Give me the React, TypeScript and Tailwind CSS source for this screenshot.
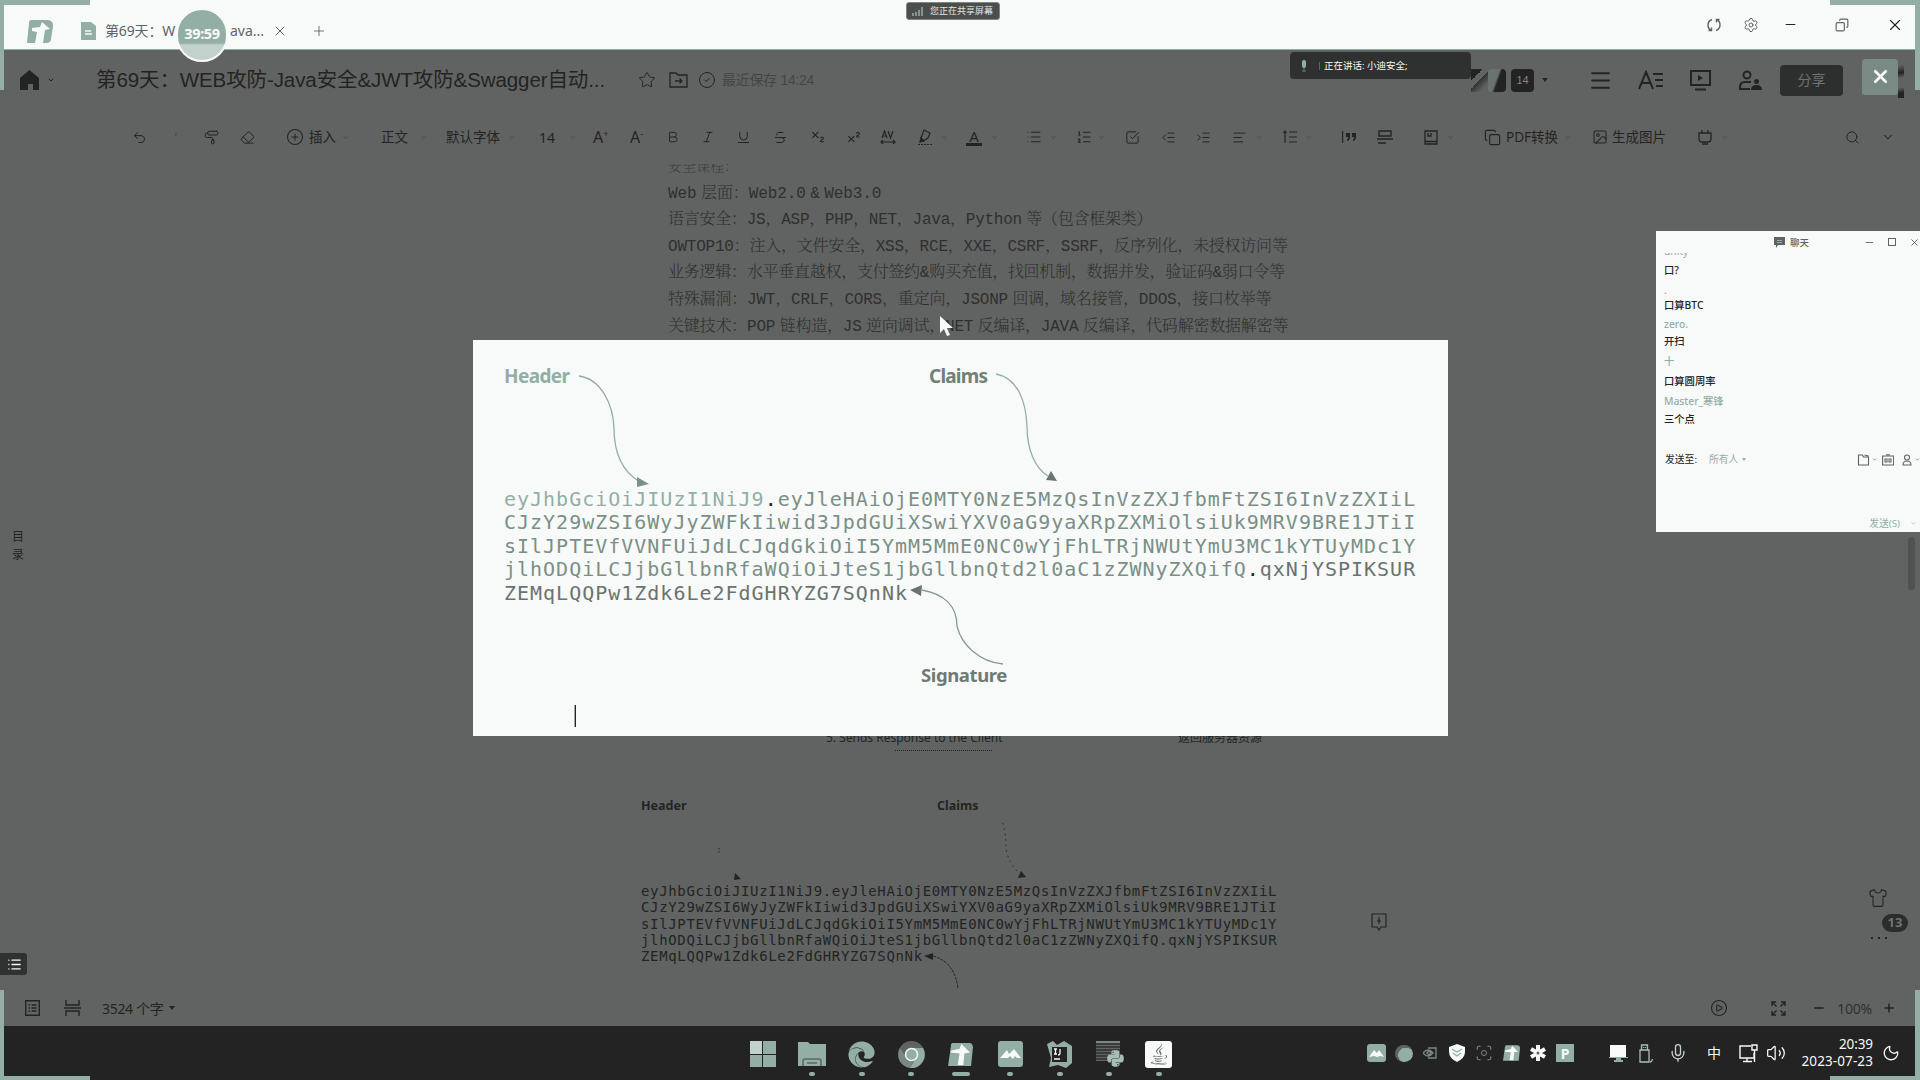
import React from 'react';
import type { ReactNode } from 'react';
import {
  Undo2, PaintRoller, Eraser, CirclePlus, Bold, Italic, Underline, Strikethrough, Subscript, Superscript,
  List, ListOrdered, SquareCheckBig, ListIndentDecrease, ListIndentIncrease, TextAlignStart, Search, ChevronDown,
  Star, CircleCheck, Copy, Image as ImageIcon, Minus, X, Plus, Settings, Mic,
  CirclePlay, Shirt, Moon, Volume2, Scan, Menu,
} from 'lucide-react';
import { FaJava, FaEdge, FaPython } from 'react-icons/fa';

const SANS = "font-['Noto_Sans','Noto_Sans_CJK_SC',sans-serif]";
const ARIAL = "font-['Liberation_Sans','Noto_Sans_CJK_SC',sans-serif]";

const TOKEN = [
  ['eyJhbGciOiJIUzI1NiJ9', '.', 'eyJleHAiOjE0MTY0NzE5MzQsInVzZXJfbmFtZSI6InVzZXIiL'],
  ['', '', 'CJzY29wZSI6WyJyZWFkIiwid3JpdGUiXSwiYXV0aG9yaXRpZXMiOlsiUk9MRV9BRE1JTiI'],
  ['', '', 'sIlJPTEVfVVNFUiJdLCJqdGkiOiI5YmM5MmE0NC0wYjFhLTRjNWUtYmU3MC1kYTUyMDc1Y'],
  ['', '', 'jlhODQiLCJjbGllbnRfaWQiOiJteS1jbGllbnQtd2l0aC1zZWNyZXQifQ'],
];
const SIGNATURE = ['qxNjYSPIKSUR', 'ZEMqLQQPw1Zdk6Le2FdGHRYZG7SQnNk'];

const NOTES: [string, string][] = [
  ['tracking-[0px]', '安全课程：'],
  ['tracking-[-0.1px]', 'Web 层面：Web2.0 & Web3.0'],
  ['tracking-[-0.25px]', '语言安全：JS，ASP，PHP，NET，Java，Python 等（包含框架类）'],
  ['tracking-[-0.22px]', 'OWTOP10：注入，文件安全，XSS，RCE，XXE，CSRF，SSRF，反序列化，未授权访问等'],
  ['tracking-[-0.26px]', '业务逻辑：水平垂直越权，支付签约&购买充值，找回机制，数据并发，验证码&弱口令等'],
  ['tracking-[-0.2px]', '特殊漏洞：JWT，CRLF，CORS，重定向，JSONP 回调，域名接管，DDOS，接口枚举等'],
  ['tracking-[-0.2px]', '关键技术：POP 链构造，JS 逆向调试，NET 反编译，JAVA 反编译，代码解密数据解密等'],
];

const Caret = () => <ChevronDown size={7} strokeWidth={2} className="opacity-60" />;
const ic = { size: 16, strokeWidth: 1.6 };

const Spacing = () => (
  <svg width="16" height="16" viewBox="0 0 16 16" fill="none" stroke="currentColor" strokeWidth="1.2">
    <path d="M2 9 4.500 2 7 9M3 7h3M8 2l2.500 7L13 2M1 13h14M3 11 1 13l2 2M13 11l2 2-2 2" />
  </svg>
);
const Marker = () => (
  <svg width="15" height="17" viewBox="0 0 15 17" fill="none" stroke="currentColor" strokeWidth="1.2">
    <path d="M6 1 12 4 10 9 5 12 3 9z" />
    <path d="M3 9l3 3-4 1z" fill="currentColor" />
    <path d="M0 15.500h14" strokeDasharray="2 1" />
  </svg>
);
const LineHeight = () => (
  <svg width="14" height="14" viewBox="0 0 14 14" fill="none" stroke="currentColor" strokeWidth="1.2">
    <path d="M2 2v11M.5 3 2 1l1.500 2M6 2h8M6 7h8M6 12h8" />
  </svg>
);
const QuoteBar = () => (
  <svg width="15" height="14" viewBox="0 0 15 14" fill="currentColor">
    <path d="M1 1h1.200v12H1zM5 3h4v4q0 3-3 4V9.500Q7 9 7 7H5zM11 3h4v4q0 3-3 4V9.500q1-.5 1-2.500h-2z" />
  </svg>
);
const Divider = () => (
  <svg width="16" height="14" viewBox="0 0 16 14" fill="none" stroke="currentColor" strokeWidth="1.4">
    <path d="M2 1h12v5H2zM0 9h16M1 13h8" />
  </svg>
);
const PageBlock = () => (
  <svg width="14" height="15" viewBox="0 0 14 15" fill="none" stroke="currentColor" strokeWidth="1.300">
    <path d="M1 1h12v13H1zM4 3v3h3V3M1 11.500h12" />
  </svg>
);
const PlugBox = () => (
  <svg width="14" height="16" viewBox="0 0 14 16" fill="none" stroke="currentColor" strokeWidth="1.300">
    <path d="M1 4h12v6q0 3-3 3H4q-3 0-3-3zM4 4V1M10 4V1M4 15h6" />
  </svg>
);

const TOOLS: [string, ReactNode][] = [
  ['w-[39px]', <Undo2 {...ic} size={15} />],
  ['w-[33px]', <span className="pl-1 text-[10px] opacity-50">’</span>],
  ['w-[36px]', <PaintRoller {...ic} className="-scale-x-100" size={15} />],
  ['w-[46px]', <Eraser {...ic} size={15} />],
  ['w-[23px]', <CirclePlus {...ic} size={18} strokeWidth={1.4} />],
  ['w-[33px]', '插入'],
  ['w-[39px]', <Caret />],
  ['w-[39px]', '正文'],
  ['w-[26px]', <Caret />],
  ['w-[62px]', '默认字体'],
  ['w-[31px]', <Caret />],
  ['w-[30px]', <span className="text-[14px]">14</span>],
  ['w-[24px]', <Caret />],
  ['w-[37px]', <span className="text-[16px]">A<sup className="text-[9px] -top-1.5">+</sup></span>],
  ['w-[36px]', <span className="text-[16px]">A<sup className="text-[9px] -top-1.5">-</sup></span>],
  ['w-[35px]', <Bold {...ic} size={14} />],
  ['w-[35px]', <Italic {...ic} size={14} />],
  ['w-[37px]', <Underline {...ic} size={15} />],
  ['w-[37px]', <Strikethrough {...ic} size={15} />],
  ['w-[36px]', <Subscript {...ic} />],
  ['w-[34px]', <Superscript {...ic} />],
  ['w-[38px]', <Spacing />],
  ['w-[23px]', <Marker />],
  ['w-[25px]', <Caret />],
  ['w-[25px]', <span className="flex h-[17px] w-4 justify-center border-b-[3px] border-[#232323] text-[15px] leading-[14px]">A</span>],
  ['w-[35px]', <Caret />],
  ['w-[24px]', <List {...ic} />],
  ['w-[26px]', <Caret />],
  ['w-[22px]', <ListOrdered {...ic} />],
  ['w-[27px]', <Caret />],
  ['w-[36px]', <SquareCheckBig {...ic} size={15} />],
  ['w-[35px]', <ListIndentDecrease {...ic} size={15} />],
  ['w-[36px]', <ListIndentIncrease {...ic} size={15} />],
  ['w-[24px]', <TextAlignStart {...ic} size={15} />],
  ['w-[27px]', <Caret />],
  ['w-[22px]', <LineHeight />],
  ['w-[36px]', <Caret />],
  ['w-[36px]', <QuoteBar />],
  ['w-[47px]', <Divider />],
  ['w-[23px]', <PageBlock />],
  ['w-[37px]', <Caret />],
  ['w-[22px]', <Copy {...ic} size={17} />],
  ['w-[58px]', 'PDF转换'],
  ['w-[28px]', <Caret />],
  ['w-[20px]', <ImageIcon {...ic} />],
  ['w-[86px]', '生成图片'],
  ['w-[23px]', <PlugBox />],
  ['w-[124px]', <Caret />],
  ['w-[36px]', <Search {...ic} size={15} />],
  ['w-[20px]', <ChevronDown size={14} strokeWidth={1.8} />],
];

const DocsLogo = ({ className = '' }: { className?: string }) => (
  <svg className={className} viewBox="0 0 26 24">
    <path d="M5 0h17q4 0 4 5l-2 19H0L3 3q0-3 2-3z" fill="#93aea5" />
    <path d="m3 8 9-2 2-5 9 9-6 1-1 12h-6l2-12-9-1z" fill="#f8faf9" />
  </svg>
);

const TitleBar = () => (
  <div className={`flex h-[50px] shrink-0 items-center border-b border-[#93aea5] bg-[#f8faf9] text-[#616362] ${SANS}`}>
    <svg width="27" height="24" viewBox="0 0 27 24" className="ml-[27px] mt-[14px]">
      <path d="M4 0h17q6 1 5 7l-2 12q0 4-5 4h-3l2-13 5-1-8-7-2 5-8 1v3l5 1-2 11H0L2 3q0-3 2-3z" fill="#93aea5" />
    </svg>
    <svg width="17" height="18" viewBox="0 0 17 18" className="ml-[26px] mt-[13px]">
      <path d="M1 0h10l5 4v14H1z" fill="#93aea5" />
      <path d="M5 9h6M5 12h7" stroke="#f8faf9" strokeWidth="1.300" />
    </svg>
    <span className="ml-2 mt-[13px] w-[125px] whitespace-nowrap text-[14px] leading-5 tracking-[-0.15px]">第69天：W</span>
    <span className="mt-[13px] w-[33px] whitespace-nowrap text-[14px] leading-5">ava...</span>
    <X size={16} strokeWidth={1.5} className="ml-[9px] mt-[13px]" />
    <Plus size={16} strokeWidth={1.3} className="ml-[23px] mt-[13px]" />
    <div className="ml-auto mr-[16px] flex items-center">
      <svg width="14" height="14" viewBox="0 0 14 14" className="mr-[22px]" fill="none" stroke="currentColor" strokeWidth="1.400">
        <path d="M5 1.500Q1 3 1 7t3 5M1.500 12.500H4.500V9.500M9 12.500q4-1.500 4-5.500t-3-5M12.500 1.500H9.500V4.500" />
      </svg>
      <Settings size={16} strokeWidth={1.5} className="mr-[24px]" />
      <Minus size={15} strokeWidth={1.6} className="mr-[37px] text-[#232323]" />
      <Copy size={14} strokeWidth={2} className="mr-[37px] -scale-x-100" />
      <X size={18} strokeWidth={1.5} className="text-[#232323]" />
    </div>
  </div>
);

const Header = () => (
  <div className={`flex h-[60px] shrink-0 items-center ${ARIAL}`}>
    <svg width="19" height="20" viewBox="0 0 19 20" className="ml-[20px]" fill="#232323"><path d="M9.500 0 19 8v12h-6v-6H8v6H0V8z" /></svg>
    <ChevronDown size={8} strokeWidth={3} className="ml-2" />
    <span className="ml-[41px] w-[510px] whitespace-nowrap text-[20.500px] tracking-[-0.1px]">第69天：WEB攻防-Java安全&amp;JWT攻防&amp;Swagger自动...</span>
    <Star size={18} strokeWidth={1.3} className="ml-[32px]" />
    <svg width="19" height="16" viewBox="0 0 19 16" className="ml-[13px]" fill="none" stroke="currentColor" strokeWidth="1.300">
      <path d="M1 1h6l2 2h9v12H1zM6 9h7M10.500 6.500 13 9l-2.500 2.500" />
    </svg>
    <CircleCheck size={18} strokeWidth={1.3} className="ml-[10px]" />
    <span className="ml-[6px] text-[14px] tracking-[-0.3px] opacity-45">最近保存 14:24</span>
    <div className="ml-auto mr-[77px] flex items-center">
      <div className="flex h-[23px] w-[40px]">
        <span className="h-full w-[17px] bg-[linear-gradient(135deg,#232323_30%,#616362_30%,#616362_50%,#333_50%,#616362_80%)]" />
        <span className="h-full w-[18px] rounded-sm bg-[linear-gradient(110deg,#6b7370_45%,#232323_55%)]" />
      </div>
      <span className="flex h-[23px] w-[23px] items-center justify-center rounded bg-[#232323] text-[11px] text-[#7b8783]">14</span>
      <span className="ml-[8px] border-x-[3px] border-t-[4px] border-x-transparent border-t-[#232323]" />
      <Menu size={25} strokeWidth={2} className="ml-[40px]" />
      <svg width="26" height="20" viewBox="0 0 26 20" className="ml-[25px]" fill="none" stroke="currentColor" strokeWidth="2">
        <path d="M1 19 8 2l7 17M4 13h8M15 4h10M17 10h8M18 16h7" />
      </svg>
      <svg width="21" height="21" viewBox="0 0 21 21" className="ml-[26px]" fill="none" stroke="currentColor" strokeWidth="2">
        <path d="M1 1h19v14H1zM5 19.500h11" />
        <path d="M8 5v6l5-3z" fill="currentColor" stroke="none" />
      </svg>
      <svg width="25" height="21" viewBox="0 0 25 21" className="ml-[27px]" fill="none" stroke="currentColor" strokeWidth="2">
        <circle cx="9" cy="5" r="3.500" />
        <path d="M13 12H7q-5 0-5 5v2h10" />
        <circle cx="18.500" cy="11.500" r="2.500" fill="currentColor" stroke="none" />
        <path d="M13 20q0-5 5.500-5t5.500 5z" fill="currentColor" stroke="none" />
      </svg>
      <span className="ml-[17px] flex h-[31px] w-[63px] items-center justify-center rounded bg-[#2d2f2e] text-[14px] text-[#6d7572]">分享</span>
    </div>
  </div>
);

const Toolbar = () => (
  <div className={`flex h-[54px] shrink-0 items-center whitespace-nowrap pl-[132px] text-[13.500px] ${SANS}`}>
    {TOOLS.map(([w, node], i) => (
      <span key={i} className={`flex shrink-0 items-center ${w}`}>{node}</span>
    ))}
  </div>
);

const SmallDiagram = () => (
  <div className="relative mt-[45px] w-[640px]">
    <div className={`flex text-[12.500px] font-bold leading-5 ${SANS}`}>
      <span className="w-[296px]">Header</span>
      <span>Claims</span>
    </div>
    <svg width="640" height="200" className="absolute left-0 top-0" fill="none" stroke="#232323" strokeWidth="1">
      <path d="M362 27q3 12 3 25 2 14 12 24" strokeDasharray="1.500 4" />
      <path d="M292 160q22 6 25 33" strokeDasharray="3 1" />
      <path d="M78 52v5" strokeDasharray="1.500 1.500" />
      <path d="m93 84 7-1-6-6zM377 82l8-1-5-6zM283 160l9-3v7z" fill="#232323" stroke="none" />
    </svg>
    <div className="mt-[61px] whitespace-pre pt-[6px] font-['DejaVu_Sans_Mono',monospace] text-[14px] leading-[16.300px] tracking-[0.66px]">
      {TOKEN.map((parts, i) => (
        <div key={i}>{parts.join('')}{i === 3 ? '.' + SIGNATURE[0] : ''}</div>
      ))}
      <div>{SIGNATURE[1]}</div>
    </div>
  </div>
);

const Document = () => (
  <div className="flex min-h-0 flex-1 overflow-hidden">
    <div className={`flex w-[641px] flex-col pl-3 pt-[364px] text-[12px] leading-[18px] ${SANS}`}>
      <span>目</span>
      <span>录</span>
    </div>
    <div className="flex w-[730px] flex-col">
      <div className="h-[572px] overflow-hidden pl-[27px] font-['Liberation_Mono','Noto_Serif_CJK_SC','Noto_Sans_CJK_SC',monospace] text-[16px] font-light leading-[26.600px] opacity-80 [word-spacing:-5px]">
        {NOTES.map(([tracking, text], i) => (
          <div key={i} className={`whitespace-nowrap ${i === 0 ? 'mt-[-10px] text-[14px] opacity-70' : ''} ${tracking}`}>{text}</div>
        ))}
      </div>
      <div className={`-mt-[8px] flex h-[20px] items-center text-[12px] ${SANS}`}>
        <span className="ml-[185px] w-[352px]">5. Sends Response to the Client</span>
        <span>返回服务器资源</span>
      </div>
      <div className="ml-[254px] mt-[2px] w-[97px] border-b border-dotted border-[#232323]" />
      <SmallDiagram />
    </div>
    <svg width="16" height="18" viewBox="0 0 16 18" fill="none" stroke="#232323" strokeWidth="1.200" className="mt-[749px]">
      <path d="M1 1h14v13H10l-2 3-2-3H1zM8 4v7M6 8h4" />
    </svg>
  </div>
);

const StatusBar = () => (
  <div className={`flex h-[36px] shrink-0 items-center text-[14px] ${SANS}`}>
    <svg width="15" height="16" viewBox="0 0 15 16" fill="none" stroke="currentColor" strokeWidth="1.400" className="ml-[25px]">
      <path d="M.7.7h13.600v14.600H.7zM3.500 5h1.500M6.500 5h5M3.500 8h1.500M6.500 8h5M3.500 11h1.500M6.500 11h5" />
    </svg>
    <svg width="17" height="16" viewBox="0 0 17 16" fill="none" stroke="currentColor" strokeWidth="1.400" className="ml-[24px]">
      <path d="M2 0v5h13V0M0 8h17M2 16v-5h13v5" />
    </svg>
    <span className="ml-[21px] tracking-[-0.3px]">3524 个字</span>
    <span className="ml-[5px] border-x-[3px] border-t-[4px] border-x-transparent border-t-[#232323]" />
    <div className="ml-auto mr-[24px] flex items-center">
      <CirclePlay size={18} strokeWidth={1.500} className="mr-[43px]" />
      <svg width="15" height="15" viewBox="0 0 15 15" className="mr-[26px]" fill="none" stroke="currentColor" strokeWidth="1.400">
        <path d="M1 5V1h4M1 1l4.500 4.500M10 1h4v4M14 1 9.500 5.500M1 10v4h4M1 14l4.500-4.500M14 10v4h-4M14 14 9.500 9.500" />
      </svg>
      <Minus size={14} strokeWidth={2.500} className="mr-[11px]" />
      <span className="mr-[10px] text-[14px] tracking-[-0.2px] opacity-80">100%</span>
      <Plus size={14} strokeWidth={2.500} />
    </div>
  </div>
);

const APPS: ReactNode[] = [
  <div className="grid h-[26px] w-[26px] grid-cols-2 gap-[1px]">
    <i className="bg-[#c3d1cc]" /><i className="bg-[#93aea5]" /><i className="bg-[#93aea5]" /><i className="bg-[#93aea5]" />
  </div>,
  <svg width="28" height="26" viewBox="0 0 28 26"><path d="M0 1h10l2 2h16v22H0z" fill="#93aea5" /><path d="M5 25v-5q0-2 2-2h14q2 0 2 2v5M9 22h10" fill="none" stroke="#616362" strokeWidth="1.500" /></svg>,
  <FaEdge size={27} color="#93aea5" />,
  <svg width="27" height="27" viewBox="0 0 27 27"><circle cx="13.500" cy="13.500" r="13.500" fill="#616362" /><path d="M13 7h12a13.500 13.500 0 0 1-13 20l6-10z" fill="#93aea5" /><path d="M2 7a13.500 13.500 0 0 0 10 20l4-8-8-3z" fill="#7b8783" /><circle cx="13.500" cy="13.500" r="6" fill="#93aea5" stroke="#f8faf9" strokeWidth="1.500" /></svg>,
  <DocsLogo className="h-[23px] w-[25px]" />,
  <svg width="25" height="26" viewBox="0 0 25 26"><rect width="25" height="26" rx="3" fill="#93aea5" /><path d="M2 17 9 9l2 4 5-5 7 9h-4l-2-2-2 3-3-3-2 2z" fill="#f8faf9" /></svg>,
  <svg width="27" height="27" viewBox="0 0 27 27"><path d="M1 3 7 0l4 4 7-4 8 5v17l-6 5-8-3-9 2 2-9z" fill="#93aea5" /><rect x="6" y="6" width="15" height="15" fill="#232323" /><path d="M8 8h3M9.500 8v5M8 13h3M14 8v4q0 2-2 2M8 18h6" stroke="#f8faf9" strokeWidth="1.300" fill="none" /></svg>,
  <div className="relative h-[26px] w-[27px]">
    <div className="h-[20px] w-[24px] border-t-2 border-[#7b8783] bg-[repeating-linear-gradient(0deg,#616362_0_1px,#3a3b3b_1px_3px)]" />
    <FaPython size={19} color="#a9beb7" className="absolute bottom-[-1px] right-[-2px]" />
  </div>,
  <div className="flex h-[27px] w-[27px] items-center justify-center rounded-[3px] bg-[#f8faf9]"><FaJava size={22} color="#616362" /></div>,
];

const Taskbar = () => (
  <div className={`flex h-[54px] shrink-0 items-center bg-[#232323] text-[#f8faf9] ${SANS}`}>
    <div className="ml-[738px] flex h-full">
      {APPS.map((app, i) => (
        <div key={i} className="flex h-full w-[49.500px] flex-col items-center">
          <div className="mt-[14px] flex h-[28px] items-center">{app}</div>
          {i > 0 && <div className={`mt-[4px] h-[4px] rounded-full bg-[#93aea5] ${i === 4 ? 'w-[18px]' : 'w-[6px]'}`} />}
        </div>
      ))}
    </div>
    <div className="ml-auto mr-[20px] flex items-center">
      <span className="mr-[9px] flex h-[18px] w-[19px] items-center rounded-[3px] bg-[#93aea5]">
        <svg width="19" height="10" viewBox="0 0 19 10"><path d="m2 9 5-7 3 3 2-3 5 7-4-1-3 1-3-1z" fill="#f8faf9" /></svg>
      </span>
      <span className="mr-[10px] h-[17px] w-[18px] rounded-full bg-[radial-gradient(circle_at_60%_60%,#93aea5_50%,#616362_52%)]" />
      <svg width="14" height="12" viewBox="0 0 14 12" className="mr-[12px]" fill="none" stroke="#7b8783" strokeWidth="1.400"><path d="M5 1h8v10H5M0 6q5-6 10 0-5 6-10 0zM4 6q2-3 4 0-2 3-4 0z" /></svg>
      <svg width="16" height="18" viewBox="0 0 16 18" className="mr-[10px]"><path d="m8 0 8 3v5q0 6-8 10Q0 14 0 8V3z" fill="#f8faf9" /><path d="m3 5 5 3 5-3M4 9l4 3 4-3" fill="none" stroke="#93aea5" strokeWidth="1.300" /></svg>
      <span className="relative mr-[10px]"><Scan size={18} strokeWidth={1.500} color="#7b8783" /><span className="absolute left-[6px] top-[6px] h-[6px] w-[6px] rounded-full border border-[#7b8783]" /></span>
      <DocsLogo className="mr-[10px] h-[16px] w-[17px]" />
      <svg width="16" height="16" viewBox="0 0 16 16" className="mr-[10px]" stroke="#f8faf9" strokeWidth="4"><path d="M8 0v16M1 4l14 8M15 4 1 12" /><circle cx="8" cy="8" r="1.500" fill="#616362" stroke="none" /></svg>
      <span className="mr-[35px] flex h-[18px] w-[18px] items-center justify-center bg-[#93aea5] text-[14px] font-bold">P</span>
      <svg width="19" height="18" viewBox="0 0 19 18" className="mr-[11px]" fill="#f8faf9"><path d="M1 1h16v12H1z" /><path d="M7 13h5v3h2v2H5v-2h2zM0 13h19v1H0z" fill="#93aea5" /></svg>
      <svg width="14" height="19" viewBox="0 0 14 19" className="mr-[15px]" fill="none" stroke="#a9beb7" strokeWidth="1.300"><path d="M1 6h9v12H1zM2.500 6V1h6v5M4.500 3v1M6.500 3v1M11 18q2 0 2.500-3" /></svg>
      <Mic size={20} strokeWidth={1.600} color="#c3d1cc" className="mr-[19px]" />
      <span className="mr-[18px] text-[14px] leading-5">中</span>
      <svg width="19" height="19" viewBox="0 0 19 19" className="mr-[8px]" fill="none" stroke="#f8faf9" strokeWidth="1.400"><path d="M12 2H1v12h14V9M4 17.500h9M8 14v3M13 1h5v5h-5zM15.500 6v12" /></svg>
      <Volume2 size={20} strokeWidth={1.500} className="mr-[15px]" />
      <div className="mr-[9px] flex w-[72px] flex-col items-end text-[13.500px] leading-[17px]">
        <span className="tracking-[-0.1px]">20:39</span>
        <span className="whitespace-nowrap tracking-[0.1px]">2023-07-23</span>
      </div>
      <Moon size={18} strokeWidth={1.700} className="rotate-[80deg] -scale-x-100" />
    </div>
  </div>
);

const JwtImage = () => (
  <div className="absolute left-[473px] top-[340px] h-[396px] w-[975px] bg-[#f8faf9]">
    <div className={`flex pl-[31px] pt-[22px] text-[19px] font-bold leading-7 ${SANS}`}>
      <span className="w-[425px] tracking-[-0.6px] text-[#93aea5]">Header</span>
      <span className="tracking-[-0.8px] text-[#718079]">Claims</span>
    </div>
    <div className="mt-[98px] whitespace-pre pl-[31px] font-['DejaVu_Sans_Mono',monospace] text-[20px] leading-[23.400px] tracking-[0.99px] text-[#7b8f87]">
      {TOKEN.map(([head, dot, body], i) => (
        <div key={i}>
          <span className="text-[#93aea5]">{head}</span>
          <span className="text-[#232323]">{dot}</span>
          {body}
          {i === 3 && <><span className="text-[#232323]">.</span><span className="text-[#6a736f]">{SIGNATURE[0]}</span></>}
        </div>
      ))}
      <div className="text-[#6a736f]">{SIGNATURE[1]}</div>
    </div>
    <div className={`mt-[56px] pl-[448px] text-[18.500px] font-bold leading-7 tracking-[-0.4px] text-[#6e7a75] ${SANS}`}>Signature</div>
    <div className="ml-[101px] mt-[16px] h-[22px] w-[2px] border-r border-[#232323] bg-[#93aea5]" />
    <svg width="975" height="396" className="absolute left-0 top-0" fill="none" stroke="#93aea5" strokeWidth="1.300">
      <path d="M106 36c22 3 34 28 35 52 0 26 9 44 26 54" />
      <path d="M523 34c22 4 30 28 31 52 0 24 8 42 21 50" />
      <path d="M530 324c-24-2-42-20-46-38 0-20-13-32-35-36" stroke="#869c94" />
      <path d="m176 144-12 3v-10z" fill="#7b9188" stroke="none" />
      <path d="m584 141-11-1 5-9z" fill="#6a736f" stroke="none" />
      <path d="m437 250 12-5-1 11z" fill="#6a736f" stroke="none" />
    </svg>
  </div>
);

const MESSAGES: [string, string][] = [
  ['mt-[4px] text-[#232323]', '口?'],
  ['mt-[5px] text-[#93aea5]', '.'],
  ['mt-0 text-[#232323]', '口算BTC'],
  ['mt-[4px] text-[#93aea5]', 'zero.'],
  ['mt-[2px] text-[#232323]', '开扫'],
  ['mt-[5px] text-[#93aea5]', '十'],
  ['mt-[5px] text-[#232323]', '口算圆周率'],
  ['mt-[5px] text-[#93aea5]', 'Master_寒锋'],
  ['mt-[3px] text-[#232323]', '三个点'],
];

const ChatWindow = () => (
  <div className={`absolute left-[1656px] top-[231px] flex h-[301px] w-[264px] flex-col overflow-hidden bg-[#f8faf9] text-[10.300px] leading-[15px] text-[#616362] ${SANS}`}>
    <div className="flex h-[22px] shrink-0 items-center">
      <svg width="11" height="11" viewBox="0 0 11 11" className="ml-[118px]"><path d="M0 0h11v8H4l-2 3V8H0z" fill="#616362" /><path d="M3 3.500h5M3 5.500h5" stroke="#93aea5" /></svg>
      <span className="ml-[5px] text-[9.500px] font-medium">聊天</span>
      <Minus size={11} strokeWidth={2} className="ml-[55px]" />
      <span className="ml-[13px] h-[8px] w-[8px] border border-[#616362]" />
      <X size={11} strokeWidth={2} className="ml-[13px]" />
    </div>
    <div className="h-[6px] shrink-0 overflow-hidden pl-2"><div className="-mt-[9px] text-[#93aea5]">unity</div></div>
    {MESSAGES.map(([cls, text], i) => (
      <div key={i} className={`shrink-0 pl-2 font-medium ${cls}`}>{text}</div>
    ))}
    <div className="mt-[25px] flex items-center pl-[9px] text-[9.800px]">
      <span className="w-[44px] text-[#232323]">发送至:</span>
      <span className="text-[#93aea5]">所有人</span>
      <span className="ml-1 border-x-2 border-t-[3px] border-x-transparent border-t-[#93aea5]" />
      <svg width="13" height="12" viewBox="0 0 12 12" className="ml-auto" fill="none" stroke="#616362" strokeWidth="1.100"><path d="M1 1h4l1 2h5v8H1zM7 1l4 1" /></svg>
      <ChevronDown size={5} strokeWidth={3} className="ml-[2px]" />
      <svg width="12" height="12" viewBox="0 0 12 12" className="ml-[5px]" fill="none" stroke="#616362" strokeWidth="1.100"><path d="M.6 2h11v9H.6zM5 2V0h2v2M3 5v3h2V5zM7 5h2v3H7z" /></svg>
      <svg width="10" height="12" viewBox="0 0 10 12" className="ml-[8px]" fill="none" stroke="#616362" strokeWidth="1.100"><circle cx="5" cy="3.500" r="2.500" /><path d="M1 11q0-4 4-4t4 4z" /></svg>
      <ChevronDown size={5} strokeWidth={3} className="ml-[3px] shrink-0" />
    </div>
    <div className="mt-auto mb-[1px] flex items-center justify-end text-[9.800px] text-[#93aea5]">
      <span>发送(S)</span>
      <ChevronDown size={7} className="ml-[10px] mr-[3px]" />
    </div>
  </div>
);

const ShareOverlays = () => (
  <>
    <div className="absolute left-0 top-0 h-[90px] w-[90px] border-l-[4px] border-t-[5px] border-[#93aea5]" />
    <div className="absolute right-0 top-0 h-[90px] w-[90px] border-r-[5px] border-t-[5px] border-[#93aea5]" />
    <div className="absolute bottom-0 left-0 h-[90px] w-[90px] border-b-[4px] border-l-[4px] border-[#93aea5]" />
    <div className="absolute bottom-0 right-0 h-[90px] w-[90px] border-b-[4px] border-r-[5px] border-[#93aea5]" />
    <div className={`absolute left-[906px] top-[2px] flex h-[18px] w-[94px] items-center whitespace-nowrap rounded-[3px] border border-[#7b8783] bg-[#4c4e4d] text-[9px] text-[#e0e8e5] ${SANS}`}>
      <svg width="11" height="9" viewBox="0 0 11 9" className="ml-[5px] mr-[7px] shrink-0" stroke="#93aea5" strokeWidth="1.500"><path d="M1 9V6M4 9V5M7 9V3M10 9V0" /></svg>
      您正在共享屏幕
    </div>
    <div className={`absolute left-[1290px] top-[52px] flex h-[27px] w-[181px] items-center rounded-[4px] bg-[#2f3130] text-[9.500px] text-[#f8faf9] ${SANS}`}>
      <svg width="8" height="12" viewBox="0 0 8 12" className="ml-[10px] mr-[11px]"><rect x="2" width="4" height="8" rx="2" fill="#93aea5" /><path d="M4 8v3M2 11h4" stroke="#616362" strokeWidth="1.500" /></svg>
      <span className="mr-[4px] h-[8px] w-px bg-[#616362]" />
      <span className="mt-px">正在讲话: 小迪安全;</span>
    </div>
    <div className={`absolute left-[176px] top-[8px] flex h-[54px] w-[52px] items-center justify-center rounded-full border-2 border-[#f8faf9] bg-[linear-gradient(#93aea5_66%,#c3d1cc_70%)] text-[14.500px] font-bold text-[#f8faf9] ${SANS}`}>
      <span className="-mt-[3px] tracking-[-0.4px]">39:59</span>
    </div>
    <div className="absolute left-[1898px] top-[62px] h-[36px] w-[6px] bg-[linear-gradient(170deg,#616362_10%,#232323_30%,#616362_45%,#616362_70%,#232323_85%)]" />
    <div className="absolute left-[1862px] top-[59px] flex h-[36px] w-[36px] items-center justify-center rounded-[3px] bg-[#7a8a84]">
      <X size={21} strokeWidth={3} color="#f8faf9" className="-mt-[2px]" />
    </div>
    <div className="absolute left-0 top-[953px] flex h-[22px] w-[27px] items-center rounded-r-[3px] bg-[#303231] pl-[7px]">
      <List size={15} strokeWidth={2.200} color="#f8faf9" />
    </div>
    <Shirt size={20} strokeWidth={1.300} className="absolute left-[1868px] top-[888px]" />
    <div className={`absolute left-[1882px] top-[914px] flex h-[18px] w-[26px] items-center justify-center rounded-full bg-[#2b2d2c] text-[13px] font-bold text-[#6d7572] ${SANS}`}>13</div>
    <div className="absolute left-[1871px] top-[937px] flex gap-[5px]">
      <i className="h-[2px] w-[2px] bg-[#232323]" /><i className="h-[2px] w-[2px] bg-[#232323]" /><i className="h-[2px] w-[2px] bg-[#232323]" />
    </div>
    <div className="absolute left-[1908px] top-[537px] h-[53px] w-[7px] rounded-full bg-[#505251]" />
    <svg width="14" height="21" viewBox="0 0 14 21" className="absolute left-[939px] top-[316px]">
      <path d="M1 0v17l4-4 3 7 3-1-3-7h6z" fill="#f8faf9" />
    </svg>
  </>
);

export default function App() {
  return (
    <div className="relative flex h-[1080px] w-[1920px] flex-col overflow-hidden bg-[#616362] text-[#232323]">
      <TitleBar />
      <Header />
      <Toolbar />
      <Document />
      <StatusBar />
      <Taskbar />
      <JwtImage />
      <ChatWindow />
      <ShareOverlays />
    </div>
  );
}
